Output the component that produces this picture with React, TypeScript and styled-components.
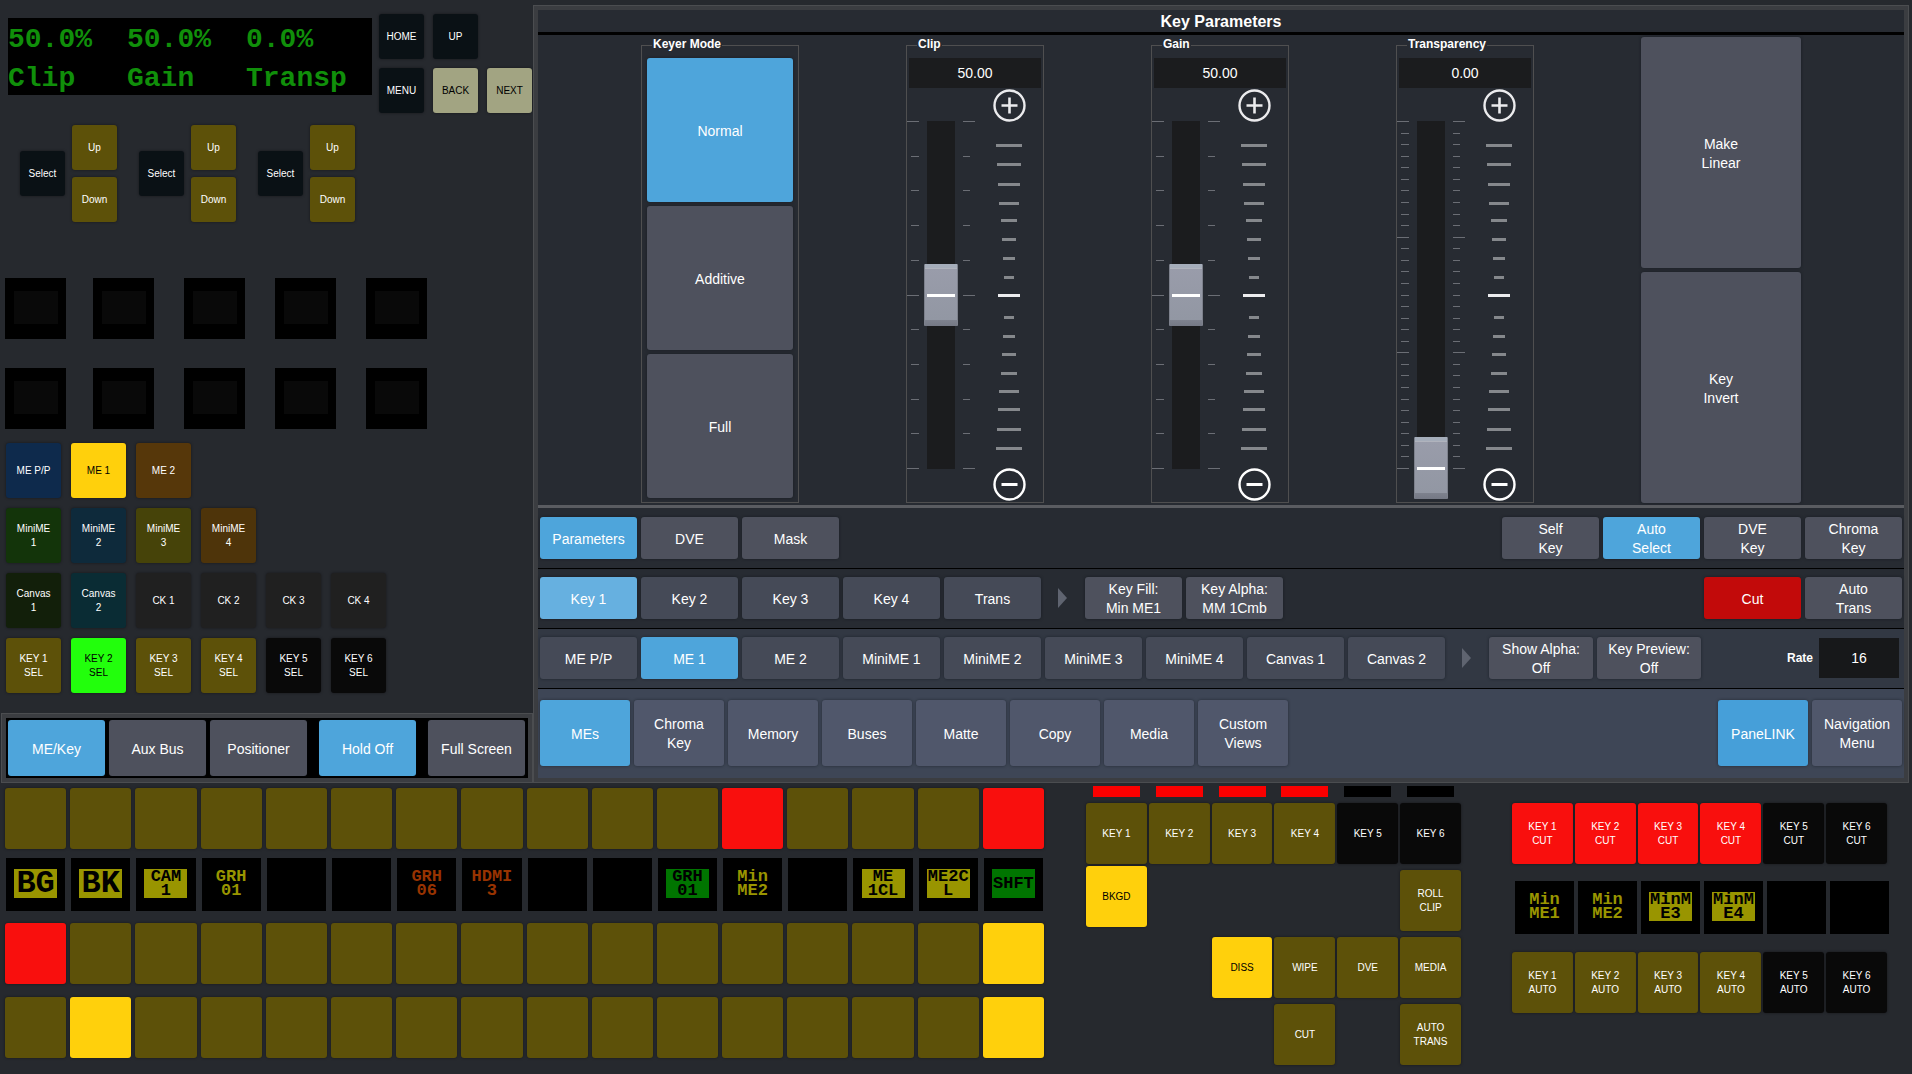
import React from "react";
import styled, { createGlobalStyle } from "styled-components";

const sans = `"Liberation Sans", Arial, sans-serif`;
const mono = `"Liberation Mono", "Courier New", monospace`;

const c = {
  page: "#26292e",
  panel: "#272b32",
  blue: "#4ea5db",
  slate: "#4e515d",
  steel: "#454a57",
  olive: "#5d5109",
  yellow: "#ffd00c",
  red: "#f90f0d",
  green: "#22ff0c",
  black: "#090909",
  ink: "#0a1115",
  bone: "#a2a482",
};

const GlobalStyle = createGlobalStyle`
  * { box-sizing: border-box; }
  body { margin: 0; background: ${c.page}; color: #fff; font-family: ${sans}; }
  button, input { font-family: inherit; color: inherit; margin: 0; border: 0; padding: 0; }
`;

const Page = styled.div`
  min-height: 100vh;
  background: ${c.page};
`;

const Top = styled.div`
  display: flex;
`;

/* ---------- hardware keys ---------- */

const HardKey = styled.button<{ $bg: string; $size?: number; $dark?: boolean }>`
  width: ${(p) => (p.$size ? `${p.$size}px` : "100%")};
  height: ${(p) => p.$size ?? 61}px;
  background: ${(p) => p.$bg};
  color: ${(p) => (p.$dark ? "#000" : "#fff")};
  border-radius: 3px;
  box-shadow: 0 0 3px rgba(0, 0, 0, 0.45);
  font-size: 10px;
  line-height: 14px;
  white-space: pre-line;
  text-align: center;
`;

/* ---------- left console ---------- */

const Console = styled.section`
  width: 533px;
  flex: none;
  display: flex;
  flex-direction: column;
`;

const ConsoleHead = styled.div`
  display: flex;
  gap: 7px;
  padding: 14px 0 0 8px;
`;

const Lcd = styled.div`
  width: 364px;
  height: 77px;
  margin-top: 4px;
  padding-top: 2px;
  background: #000;
  color: #108f0a;
  display: grid;
  grid-template-columns: 119px 119px 1fr;
  font: bold 28px/39px ${mono};
  white-space: pre-line;
`;

const NavKeys = styled.div`
  display: grid;
  grid-template-columns: repeat(3, 45px);
  gap: 9px;
`;

const Knobs = styled.div`
  display: flex;
  gap: 22px;
  padding: 12px 0 0 20px;
`;

const Knob = styled.div`
  display: flex;
  align-items: center;
  gap: 7px;
`;

const KnobSteps = styled.div`
  display: flex;
  flex-direction: column;
  gap: 7px;
`;

const Macros = styled.div`
  display: grid;
  grid-template-columns: 88px repeat(4, 91px);
  row-gap: 29px;
  padding: 56px 0 0 5px;
`;

const Macro = styled.div`
  width: 61px;
  height: 61px;
  padding: 13px 9px;
  background: #000;
`;

const MacroScreen = styled.div`
  width: 44px;
  height: 33px;
  background: #090909;
`;

const Delegation = styled.div`
  display: flex;
  flex-direction: column;
  gap: 10px;
  padding: 14px 0 20px 6px;
`;

const KeyRow = styled.div`
  display: flex;
  gap: 10px;
`;

const ModeFrame = styled.div`
  margin-left: 1px;
  border: 1px solid #4b4d50;
  background: #3b3d41;
  padding: 4px;
`;

const ModeBar = styled.nav`
  background: #000;
  padding: 2px;
  display: flex;
  gap: 12px;
`;

const ModeGroup = styled.div`
  display: flex;
  gap: 4px;
`;

/* ---------- touch panel ---------- */

const Soft = styled.button<{ $bg?: string; $w?: number; $h?: number }>`
  width: ${(p) => p.$w ?? 97}px;
  height: ${(p) => p.$h ?? 42}px;
  padding-top: 2px;
  background: ${(p) => p.$bg ?? c.slate};
  border-radius: 3px;
  box-shadow: 0 0 3px rgba(10, 14, 20, 0.5);
  font-size: 14px;
  line-height: 19px;
  white-space: pre-line;
  text-align: center;
`;

const PanelFrame = styled.main`
  flex: 1;
  min-width: 0;
  margin: 5px 3px 0 0;
  border: 1px solid #4b4d50;
  background: #3b3d41;
  padding: 4px;
`;

const Panel = styled.div`
  background: ${c.panel};
`;

const Title = styled.h1`
  margin: 0;
  height: 25px;
  border-bottom: 3px solid #000;
  font-size: 16px;
  line-height: 23px;
  font-weight: bold;
  text-align: center;
`;

const Controls = styled.div`
  display: flex;
  justify-content: center;
  gap: 107px;
  padding: 2px 0;
  border-bottom: 3px solid #5a5c61;
`;

const Group = styled.fieldset<{ $inset?: boolean }>`
  margin: 2px 0 0;
  padding: ${(p) => (p.$inset ? "6px 5px 4px" : "6px 0 0")};
  min-width: 0;
  border: 1px solid #4f4f50;
  align-self: flex-start;

  legend {
    margin-left: ${(p) => (p.$inset ? 5 : 10)}px;
  }
`;

const GroupTitle = styled.legend`
  padding: 0 1px 2px;
  font-size: 12px;
  line-height: 11px;
  font-weight: bold;
`;

const Stack = styled.div`
  display: flex;
  flex-direction: column;
  gap: 4px;
`;

const ValueBox = styled.input`
  display: block;
  width: 132px;
  height: 30px;
  margin: 0 2px;
  background: #1b1c1e;
  font-size: 14px;
  text-align: center;
`;

const FaderBody = styled.div`
  width: 136px;
  height: 414px;
  display: grid;
  grid-template-columns: 12px 44px 12px 1fr;
`;

const Scale = styled.svg`
  display: block;
  width: 12px;
  height: 414px;
`;

const Fader = styled.input`
  appearance: none;
  writing-mode: vertical-lr;
  direction: rtl;
  justify-self: center;
  width: 34px;
  height: 409px;
  margin-top: 2px;
  background: linear-gradient(#1b1c1e, #1b1c1e) center / 28px 348px no-repeat;

  &::-webkit-slider-runnable-track {
    width: 34px;
    height: 409px;
  }

  &::-webkit-slider-thumb {
    appearance: none;
    width: 34px;
    height: 62px;
    border-radius: 1px;
    background:
      linear-gradient(#fff, #fff) center 30px / 28px 3px no-repeat,
      linear-gradient(#a5adba 0 4px, #b0b3bd 4px 5px, #999caa 5px, #9297a3 56px, #7e828e 56px, #757985 62px);
    border: 0 solid #7d818c;
    border-width: 0 1px;
  }
`;

const Jog = styled.div`
  display: flex;
  flex-direction: column;
  align-items: center;
  padding: 1px 0;
`;

const JogButton = styled.button`
  display: block;
  width: 33px;
  height: 33px;
  background: none;

  svg {
    display: block;
  }
`;

const Row = styled.div<{ $bg?: string; $pad: string }>`
  display: flex;
  align-items: center;
  gap: 4px;
  padding: ${(p) => p.$pad};
  background: ${(p) => p.$bg ?? "transparent"};

  & + & {
    border-top: 1px solid #000;
  }
`;

const Spacer = styled.div`
  flex: 1;
`;

const Chevron = styled.svg`
  width: 36px;
  height: 20px;
`;

const Rate = styled.label`
  display: flex;
  align-items: center;
  gap: 6px;
  padding-right: 3px;
  font-size: 12px;
  font-weight: bold;
`;

const RateBox = styled.input`
  width: 80px;
  height: 40px;
  background: #17181a;
  font-size: 14px;
  text-align: center;
`;

/* ---------- lower bank ---------- */

const Bank = styled.div`
  display: grid;
  grid-template-columns: 1039fr 375fr 384fr;
  column-gap: 42px;
  padding: 3px 25px 9px 5px;
`;

const Buses = styled.section`
  display: grid;
  grid-template-columns: repeat(16, 1fr);
  column-gap: 4px;
  align-content: start;
  padding-top: 2px;
`;

const BusRow = styled.div<{ $after: number }>`
  grid-column: 1 / -1;
  display: grid;
  grid-template-columns: subgrid;
  margin-bottom: ${(p) => p.$after}px;
`;

const Transition = styled.section`
  display: grid;
  grid-template-columns: repeat(6, 1fr);
  column-gap: 2px;
  row-gap: 6px;
  align-content: start;
`;

const Tally = styled.div<{ $on: boolean }>`
  width: 47px;
  height: 11px;
  justify-self: center;
  background: ${(p) => (p.$on ? "#fb0000" : "#000")};
`;

const Cell = styled.div<{ $col: number; $row: number; $end?: boolean }>`
  grid-column: ${(p) => p.$col};
  grid-row: ${(p) => p.$row};
  align-self: ${(p) => (p.$end ? "end" : "start")};
`;

const TopCell = styled(Cell)`
  margin-top: -4px;
  padding-bottom: 3px;
`;

const Cuts = styled.section`
  padding: 17px 0 0 9px;
  display: flex;
  flex-direction: column;
  gap: 17px;
`;

const CutRow = styled.div`
  display: grid;
  grid-template-columns: repeat(6, 1fr);
  column-gap: 2px;
`;

const CutScreens = styled(CutRow)`
  column-gap: 4px;
  padding: 0 0 1px 3px;
  margin-right: -2px;
`;

const Mnemonic = styled.div`
  min-width: 59px;
  height: 53px;
  padding: 11px 8px;
  background: #000;
  display: flex;
  justify-content: center;

  ${BusRow} & {
    margin: 0 1px;
  }
`;

const MnemonicText = styled.div<{ $fg: string; $bg: string; $big?: boolean }>`
  width: 43px;
  height: 29px;
  flex: none;
  display: flex;
  align-items: center;
  justify-content: center;
  background: ${(p) => p.$bg};
  color: ${(p) => p.$fg};
  font-family: ${mono};
  font-weight: bold;
  font-size: ${(p) => (p.$big ? 32 : 17)}px;
  line-height: ${(p) => (p.$big ? 29 : 14)}px;
  white-space: pre-line;
  text-align: center;
`;

type Screen = { t: string; tint?: "yellow" | "orange" | "green"; solid?: boolean; big?: boolean };

const tints = { yellow: "#999500", orange: "#983300", green: "#007500" };

function Display({ t, tint = "yellow", solid, big }: Screen) {
  const color = tints[tint];
  return (
    <Mnemonic>
      {t && (
        <MnemonicText $fg={solid ? "#000" : color} $bg={solid ? color : "transparent"} $big={big}>
          {t}
        </MnemonicText>
      )}
    </Mnemonic>
  );
}

/* Dashes of the jog strip: vertical centre and length, longest at the ends. */
const jogMarks: [number, number][] = [
  [57, 26], [76, 24], [96, 22], [115, 20], [132, 16], [151, 14], [170, 12], [189, 10],
  [229, 10], [248, 12], [266, 14], [285, 16], [303, 20], [321, 22], [341, 24], [360, 26],
];

function Ticks({ steps, major, right }: { steps: number; major: number; right?: boolean }) {
  const marks = Array.from({ length: steps + 1 }, (_, i) => i);
  return (
    <Scale viewBox="0 0 12 414" aria-hidden="true">
      {marks.map((i) => {
        const long = i % major === 0;
        const w = long ? 12 : right ? 7 : 8;
        return (
          <rect key={i} x={right ? 0 : 12 - w} y={33 + Math.round((347 * i) / steps)} width={w} height={1} fill="#6b6e75" />
        );
      })}
    </Scale>
  );
}

function FaderGroup({ name, value, shown, steps, major }: { name: string; value: number; shown: string; steps: number; major: number }) {
  return (
    <Group>
      <GroupTitle>{name}</GroupTitle>
      <ValueBox aria-label={`${name} value`} defaultValue={shown} />
      <FaderBody>
        <Ticks steps={steps} major={major} />
        <Fader type="range" min={0} max={100} defaultValue={value} aria-label={name} />
        <Ticks steps={steps} major={major} right />
        <Jog>
          <JogButton aria-label={`Increase ${name}`}>
            <svg width="33" height="33" viewBox="0 0 33 33" fill="none" stroke="#ebebed">
              <circle cx="16.5" cy="16.5" r="15" strokeWidth="2.4" />
              <path d="M8.5 16.5h16M16.5 8.5v16" strokeWidth="2.6" />
            </svg>
          </JogButton>
          <svg width="34" height="346" viewBox="0 34 34 346" aria-hidden="true">
            {jogMarks.map(([y, w]) => (
              <rect key={y} x={17 - w / 2} y={y - 1} width={w} height={3} fill="#85888c" />
            ))}
            <rect x={6} y={206} width={22} height={3} fill="#ececee" />
          </svg>
          <JogButton aria-label={`Decrease ${name}`}>
            <svg width="33" height="33" viewBox="0 0 33 33" fill="none" stroke="#fff">
              <circle cx="16.5" cy="16.5" r="15" strokeWidth="2.4" />
              <path d="M8.5 16.5h16" strokeWidth="3" />
            </svg>
          </JogButton>
        </Jog>
      </FaderBody>
    </Group>
  );
}

function Arrow() {
  return (
    <Chevron viewBox="0 0 36 20" aria-hidden="true">
      <path d="M13 0L22 10L13 20Z" fill="#5f6470" />
    </Chevron>
  );
}

type KeyDef = [label: string, bg: string, dark?: boolean];

const delegation: KeyDef[][] = [
  [["ME P/P", "#0e2a4c"], ["ME 1", c.yellow, true], ["ME 2", "#56370a"]],
  [["MiniME\n1", "#13340a"], ["MiniME\n2", "#0e2a3b"], ["MiniME\n3", "#464309"], ["MiniME\n4", "#4e340a"]],
  [["Canvas\n1", "#121f0a"], ["Canvas\n2", "#0a2c34"], ["CK 1", "#202020"], ["CK 2", "#202020"], ["CK 3", "#202020"], ["CK 4", "#202020"]],
  [["KEY 1\nSEL", c.olive], ["KEY 2\nSEL", c.green, true], ["KEY 3\nSEL", c.olive], ["KEY 4\nSEL", c.olive], ["KEY 5\nSEL", c.black], ["KEY 6\nSEL", c.black]],
];

const sources: Screen[] = [
  { t: "BG", solid: true, big: true },
  { t: "BK", solid: true, big: true },
  { t: "CAM\n1", solid: true },
  { t: "GRH\n01" },
  { t: "" },
  { t: "" },
  { t: "GRH\n06", tint: "orange" },
  { t: "HDMI\n3", tint: "orange" },
  { t: "" },
  { t: "" },
  { t: "GRH\n01", tint: "green", solid: true },
  { t: "Min\nME2" },
  { t: "" },
  { t: "ME\n1CL", solid: true },
  { t: "ME2C\nL", solid: true },
  { t: "SHFT", tint: "green", solid: true },
];

const keyScreens: Screen[] = [
  { t: "Min\nME1" },
  { t: "Min\nME2" },
  { t: "MinM\nE3", solid: true },
  { t: "MinM\nE4", solid: true },
  { t: "" },
  { t: "" },
];

const buses: { name: string; lit: Record<number, string> }[] = [
  { name: "Key", lit: { 11: c.red, 15: c.red } },
  { name: "Program", lit: { 0: c.red, 15: c.yellow } },
  { name: "Preset", lit: { 1: c.yellow, 15: c.yellow } },
];

const sixteen = Array.from({ length: 16 }, (_, i) => i);
const six = [1, 2, 3, 4, 5, 6];

function BusKeys({ index }: { index: number }) {
  const { name, lit } = buses[index];
  return (
    <>
      {sixteen.map((i) => (
        <HardKey key={i} $bg={lit[i] ?? c.olive} aria-label={`${name} source ${i + 1}`} />
      ))}
    </>
  );
}

export default function App() {
  return (
    <Page>
      <GlobalStyle />
      <Top>
        <Console>
          <ConsoleHead>
            <Lcd>
              <span>{"50.0%\nClip"}</span>
              <span>{"50.0%\nGain"}</span>
              <span>{"0.0%\nTransp"}</span>
            </Lcd>
            <NavKeys>
              <HardKey $size={45} $bg={c.ink}>HOME</HardKey>
              <HardKey $size={45} $bg={c.ink}>UP</HardKey>
              <span />
              <HardKey $size={45} $bg={c.ink}>MENU</HardKey>
              <HardKey $size={45} $bg={c.bone} $dark>BACK</HardKey>
              <HardKey $size={45} $bg={c.bone} $dark>NEXT</HardKey>
            </NavKeys>
          </ConsoleHead>
          <Knobs>
            {[0, 1, 2].map((k) => (
              <Knob key={k}>
                <HardKey $size={45} $bg={c.ink}>Select</HardKey>
                <KnobSteps>
                  <HardKey $size={45} $bg={c.olive}>Up</HardKey>
                  <HardKey $size={45} $bg={c.olive}>Down</HardKey>
                </KnobSteps>
              </Knob>
            ))}
          </Knobs>
          <Macros>
            {Array.from({ length: 10 }, (_, i) => (
              <Macro key={i}>
                <MacroScreen />
              </Macro>
            ))}
          </Macros>
          <Delegation>
            {delegation.map((row, i) => (
              <KeyRow key={i}>
                {row.map(([label, bg, dark]) => (
                  <HardKey key={label} $size={55} $bg={bg} $dark={dark}>{label}</HardKey>
                ))}
              </KeyRow>
            ))}
          </Delegation>
          <ModeFrame>
            <ModeBar>
              <ModeGroup>
                <Soft $h={56} $bg={c.blue}>ME/Key</Soft>
                <Soft $h={56}>Aux Bus</Soft>
                <Soft $h={56}>Positioner</Soft>
              </ModeGroup>
              <Soft $h={56} $bg={c.blue}>Hold Off</Soft>
              <Soft $h={56}>Full Screen</Soft>
            </ModeBar>
          </ModeFrame>
        </Console>

        <PanelFrame>
          <Panel>
            <Title>Key Parameters</Title>
            <Controls>
              <Group $inset>
                <GroupTitle>Keyer Mode</GroupTitle>
                <Stack>
                  <Soft $w={146} $h={144} $bg={c.blue}>Normal</Soft>
                  <Soft $w={146} $h={144}>Additive</Soft>
                  <Soft $w={146} $h={144}>Full</Soft>
                </Stack>
              </Group>
              <FaderGroup name="Clip" value={50} shown="50.00" steps={10} major={5} />
              <FaderGroup name="Gain" value={50} shown="50.00" steps={10} major={5} />
              <FaderGroup name="Transparency" value={0} shown="0.00" steps={30} major={10} />
              <Stack>
                <Soft $w={160} $h={231}>{"Make\nLinear"}</Soft>
                <Soft $w={160} $h={231}>{"Key\nInvert"}</Soft>
              </Stack>
            </Controls>

            <Row $pad="9px 2px">
              <Soft $bg={c.blue}>Parameters</Soft>
              <Soft>DVE</Soft>
              <Soft>Mask</Soft>
              <Spacer />
              <Soft>{"Self\nKey"}</Soft>
              <Soft $bg={c.blue}>{"Auto\nSelect"}</Soft>
              <Soft>{"DVE\nKey"}</Soft>
              <Soft>{"Chroma\nKey"}</Soft>
            </Row>
            <Row $pad="8px 2px 9px">
              <Soft $bg="#66b0e0">Key 1</Soft>
              <Soft $bg={c.steel}>Key 2</Soft>
              <Soft $bg={c.steel}>Key 3</Soft>
              <Soft $bg={c.steel}>Key 4</Soft>
              <Soft $bg={c.steel}>Trans</Soft>
              <Arrow />
              <Soft>{"Key Fill:\nMin ME1"}</Soft>
              <Soft>{"Key Alpha:\nMM 1Cmb"}</Soft>
              <Spacer />
              <Soft $bg="#c20a0a">Cut</Soft>
              <Soft>{"Auto\nTrans"}</Soft>
            </Row>
            <Row $pad="8px 2px 9px" $bg="#323843">
              {["ME P/P", "ME 1", "ME 2", "MiniME 1", "MiniME 2", "MiniME 3", "MiniME 4", "Canvas 1", "Canvas 2"].map((t) => (
                <Soft key={t} $bg={t === "ME 1" ? c.blue : c.steel}>{t}</Soft>
              ))}
              <Arrow />
              <Soft $w={104}>{"Show Alpha:\nOff"}</Soft>
              <Soft $w={104}>{"Key Preview:\nOff"}</Soft>
              <Spacer />
              <Rate>
                Rate
                <RateBox defaultValue="16" />
              </Rate>
            </Row>
            <Row $pad="11px 2px 12px" $bg="#3e4656">
              {["MEs", "Chroma\nKey", "Memory", "Buses", "Matte", "Copy", "Media", "Custom\nViews"].map((t) => (
                <Soft key={t} $w={90} $h={66} $bg={t === "MEs" ? c.blue : "#50576b"}>{t}</Soft>
              ))}
              <Spacer />
              <Soft $w={90} $h={66} $bg="#469fd9">PaneLINK</Soft>
              <Soft $w={90} $h={66} $bg="#50576b">{"Navigation\nMenu"}</Soft>
            </Row>
          </Panel>
        </PanelFrame>
      </Top>

      <Bank>
        <Buses>
          <BusRow $after={9}><BusKeys index={0} /></BusRow>
          <BusRow $after={12}>
            {sources.map((s, i) => (
              <Display key={i} {...s} />
            ))}
          </BusRow>
          <BusRow $after={13}><BusKeys index={1} /></BusRow>
          <BusRow $after={0}><BusKeys index={2} /></BusRow>
        </Buses>

        <Transition>
          {six.map((n) => (
            <Tally key={n} $on={n < 5} />
          ))}
          {six.map((n) => (
            <HardKey key={n} $bg={n < 5 ? c.olive : c.black}>{`KEY ${n}`}</HardKey>
          ))}
          <TopCell $col={1} $row={3}><HardKey $bg={c.yellow} $dark>BKGD</HardKey></TopCell>
          <Cell $col={6} $row={3} $end><HardKey $bg={c.olive}>{"ROLL\nCLIP"}</HardKey></Cell>
          <Cell $col={3} $row={4}><HardKey $bg={c.yellow} $dark>DISS</HardKey></Cell>
          <Cell $col={4} $row={4}><HardKey $bg={c.olive}>WIPE</HardKey></Cell>
          <Cell $col={5} $row={4}><HardKey $bg={c.olive}>DVE</HardKey></Cell>
          <Cell $col={6} $row={4}><HardKey $bg={c.olive}>MEDIA</HardKey></Cell>
          <Cell $col={4} $row={5}><HardKey $bg={c.olive}>CUT</HardKey></Cell>
          <Cell $col={6} $row={5}><HardKey $bg={c.olive}>{"AUTO\nTRANS"}</HardKey></Cell>
        </Transition>

        <Cuts>
          <CutRow>
            {six.map((n) => (
              <HardKey key={n} $bg={n < 5 ? c.red : c.black}>{`KEY ${n}\nCUT`}</HardKey>
            ))}
          </CutRow>
          <CutScreens>
            {keyScreens.map((s, i) => (
              <Display key={i} {...s} />
            ))}
          </CutScreens>
          <CutRow>
            {six.map((n) => (
              <HardKey key={n} $bg={n < 5 ? c.olive : c.black}>{`KEY ${n}\nAUTO`}</HardKey>
            ))}
          </CutRow>
        </Cuts>
      </Bank>
    </Page>
  );
}
